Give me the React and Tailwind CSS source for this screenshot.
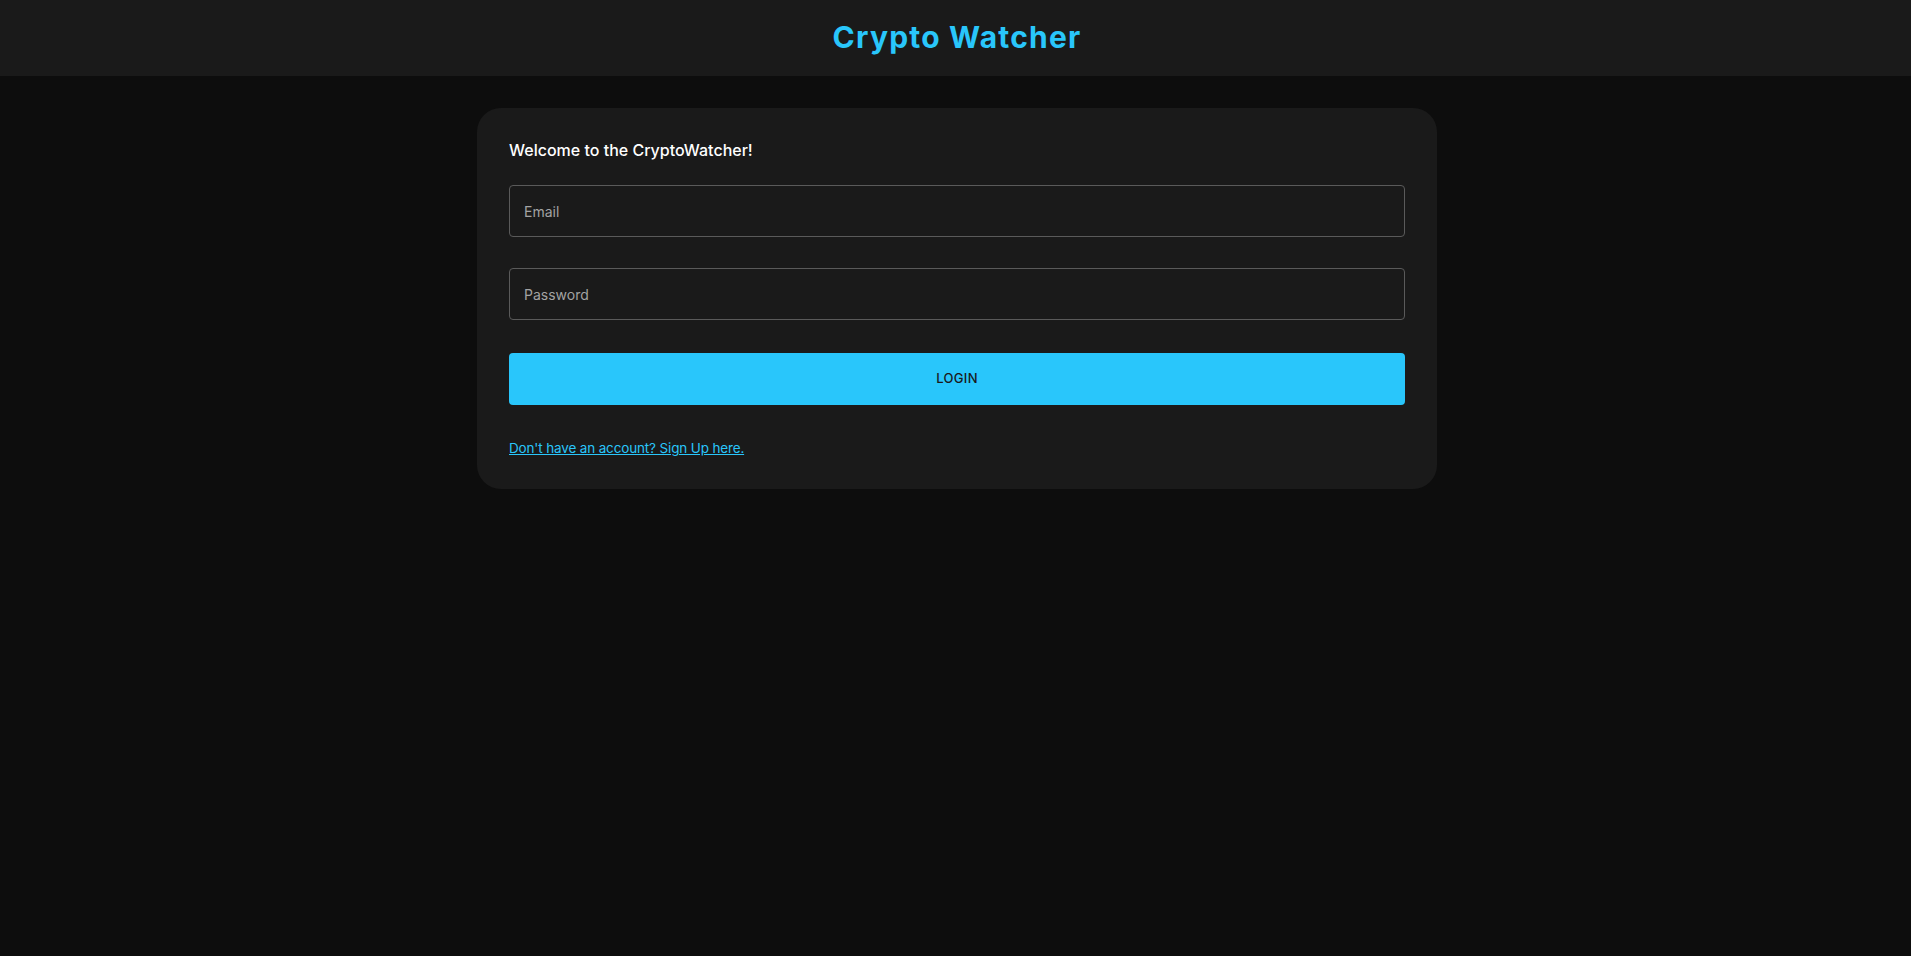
import React from 'react';

const App = () => {
    return (
        <div className="min-h-screen bg-[#0d0d0d] font-['Inter',sans-serif]">
            {/* Header */}
            <header className="h-[76px] bg-[#1a1a1a] flex items-center justify-center pb-[2px]">
                <h1 className="text-[30px] font-bold text-[#29c6fb] tracking-[1.2px] ml-[3px]">Crypto Watcher</h1>
            </header>

            <main className="flex justify-center pt-8">
                <div className="w-[960px] ml-[3px] bg-[#1a1a1a] rounded-[24px] px-8 pt-[31px] pb-[30px]">
                    <h2 className="text-[16px] font-medium text-white leading-[22px]">Welcome to the CryptoWatcher!</h2>

                    <form className="mt-[24px]" onSubmit={(e) => e.preventDefault()}>
                        <input
                            type="email"
                            placeholder="Email"
                            className="block w-full h-[52px] bg-transparent border border-[#5a5a5a] rounded-[4px] px-[14px] text-[14px] text-white placeholder:text-[#a3a3a3] outline-none"
                        />
                        <input
                            type="password"
                            placeholder="Password"
                            className="block w-full h-[52px] mt-[31px] bg-transparent border border-[#5a5a5a] rounded-[4px] px-[14px] text-[14px] text-white placeholder:text-[#a3a3a3] outline-none"
                        />
                        <button
                            type="submit"
                            className="block w-full h-[52px] mt-[33px] bg-[#29c6fb] rounded-[4px] text-[13px] font-medium text-[#1a1a1a] uppercase tracking-[0.3px]"
                        >
                            Login
                        </button>
                    </form>

                    <a href="#" className="inline-block mt-[33px] text-[13.5px] tracking-[-0.15px] text-[#29c6fb] underline leading-[20px]">
                        Don't have an account? Sign Up here.
                    </a>
                </div>
            </main>
        </div>
    );
};

export default App;
